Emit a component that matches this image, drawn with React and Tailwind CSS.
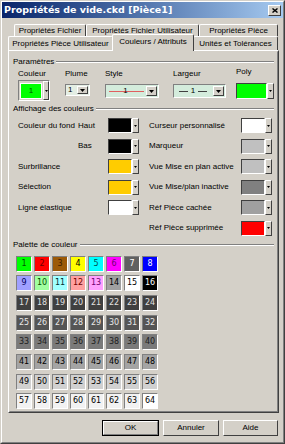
import React from "react";

const Tri = ({ w = 5, h = 3 }) => (
  <svg width={w} height={h} viewBox={`0 0 ${w} ${h}`}>
    <path d={`M0 0H${w}L${w / 2} ${h}Z`} fill="#000" />
  </svg>
);

const Arrow = ({ className = "" }) => (
  <div
    className={`flex items-center justify-center bg-[#d4d0c8] border border-t-white border-l-white border-r-[#404040] border-b-[#404040] ${className}`}
  >
    <Tri w={3} h={2} />
  </div>
);

const ColorBtn = ({ color }) => (
  <div className="flex h-[15px]">
    <div
      className="w-[24px] h-[15px] border border-t-[#404040] border-l-[#404040] border-r-white border-b-white"
      style={{ background: color }}
    />
    <Arrow className="w-[7px] h-[15px]" />
  </div>
);

const Dropdown = ({ w, h, bg, children, aw = 11 }) => (
  <div
    className={`flex items-stretch border border-t-[#808080] border-l-[#808080] border-r-white border-b-white`}
    style={{ width: w, height: h, background: bg }}
  >
    <div className="flex-1 relative flex items-center justify-center">{children}</div>
    <div className="flex items-center justify-center bg-[#d4d0c8] border border-t-white border-l-white border-r-[#404040] border-b-[#404040] m-[1px]" style={{ width: aw }}>
      <Tri w={5} h={3} />
    </div>
  </div>
);

const GroupLabel = ({ text }) => (
  <div className="flex items-center h-[10px] pl-[3px] pr-[3px]">
    <span className="leading-[10px]">{text}</span>
    <div className="flex-1 ml-[2px] border-t border-t-[#808080] border-b border-b-white" />
  </div>
);

const palette = [
  ["#00ff00", "#005000"], ["#ff0000", "#700000"], ["#9c5a08", "#3c2000"], ["#ffff00", "#000000"],
  ["#00ffff", "#005050"], ["#ff00ff", "#700070"], ["#606060", "#ffffff"], ["#0000ff", "#ffffff"],
  ["#a0a0ff", "#000060"], ["#a0ffa0", "#005000"], ["#a0ffff", "#003030"], ["#ffa0a0", "#700000"],
  ["#ffa0ff", "#700070"], ["#a0a0a0", "#000000"], ["#ffffff", "#000000"], ["#000000", "#ffffff"],
];
for (let i = 17; i <= 24; i++) palette.push(["#404040", "#e0e0e0"]);
for (let i = 25; i <= 32; i++) palette.push(["#555555", "#e8e8e8"]);
for (let i = 33; i <= 40; i++) palette.push(["#7a7a7a", "#202020"]);
for (let i = 41; i <= 48; i++) palette.push(["#a4a4a4", "#000000"]);
for (let i = 49; i <= 56; i++) palette.push(["#d0d0d0", "#000000"]);
for (let i = 57; i <= 64; i++) palette.push([i === 64 ? "#ffffff" : "#f2f2f2", "#000000"]);

const leftRows = [
  ["Couleur du fond", "Haut", "#000000"],
  [null, "Bas", "#000000"],
  ["Surbrillance", null, "#ffcc00"],
  ["Sélection", null, "#ffcc00"],
  ["Ligne élastique", null, "#ffffff"],
];
const rightRows = [
  ["Curseur personnalisé", "#ffffff"],
  ["Marqueur", "#c0c0c0"],
  ["Vue Mise en plan active", "#c0c0c0"],
  ["Vue Mise/plan inactive", "#808080"],
  ["Réf Pièce cachée", "#a0a0a0"],
  ["Réf Pièce supprimée", "#ff0000"],
];

const Tab = ({ w, children }) => (
  <div
    className="h-full flex items-center justify-center border-t border-l border-t-white border-l-white border-r border-r-[#404040] rounded-tl-[2px] rounded-tr-[2px] whitespace-nowrap leading-[10px]"
    style={{ width: w }}
  >
    {children}
  </div>
);

export default function App() {
  return (
    <div className="w-[285px] h-[444px] bg-[#d4d0c8] border border-t-[#d4d0c8] border-l-[#d4d0c8] border-r-[#404040] border-b-[#404040] font-['Liberation_Sans',sans-serif] text-[8px] text-black overflow-hidden">
      <div className="h-full flex flex-col border border-t-white border-l-white border-r-[#808080] border-b-[#808080]">
        {/* Title bar */}
        <div className="h-[16px] flex items-center justify-between pl-[2px] pr-[2px] bg-gradient-to-r from-[#0a246a] to-[#a6caf0]">
          <span className="font-['DejaVu_Sans',sans-serif] font-bold text-[9.5px] leading-[12px] text-white whitespace-nowrap">
            Propriétés de vide.ckd [Pièce1]
          </span>
          <div className="w-[13px] h-[11px] flex items-center justify-center bg-[#d4d0c8] border border-t-white border-l-white border-r-[#404040] border-b-[#404040]">
            <svg width="6" height="5" viewBox="0 0 6 5">
              <path d="M0.5 0.5L5.5 4.5M5.5 0.5L0.5 4.5" stroke="#000" strokeWidth="1.4" />
            </svg>
          </div>
        </div>

        {/* Tabs */}
        <div className="mt-[6px] h-[12px] flex pl-[12px]">
          <Tab w={72}>Propriétés Fichier</Tab>
          <Tab w={113}>Propriétés Fichier Utilisateur</Tab>
          <Tab w={79}>Propriétés Pièce</Tab>
        </div>
        <div className="h-[14px] flex pl-[6px] items-end">
          <Tab w={105}>Propriétés Pièce Utilisateur</Tab>
          <div
            className="relative z-10 -mb-[1px] -mx-[1px] h-[17px] w-[82px] bg-[#d4d0c8] flex items-center justify-center border-t border-l border-t-white border-l-white border-r border-r-[#404040] rounded-tl-[2px] rounded-tr-[2px] whitespace-nowrap leading-[10px] pb-[2px]"
          >
            Couleurs / Attributs
          </div>
          <Tab w={85}>Unités et Tolérances</Tab>
        </div>

        {/* Panel */}
        <div className="ml-[6px] w-[271px] h-[363px] border border-t-white border-l-white border-r-[#404040] border-b-[#404040]">
          <div className="h-full flex flex-col border border-transparent border-r-[#808080] border-b-[#808080] pt-[5px]">
            <GroupLabel text="Paramètres" />

            <div className="flex items-start pl-[8px] mt-[2px]">
              {/* Couleur */}
              <div className="w-[32px] flex flex-col">
                <div className="h-[10px] leading-[10px]">Couleur</div>
                <div className="mt-[1px] flex h-[21px] border border-t-[#808080] border-l-[#808080] border-r-white border-b-white">
                  <div className="mt-[2px] ml-[1px] w-[23px] h-[16px] bg-[#00ff00] flex items-center justify-center text-[#005000] border border-white">1</div>
                  <Arrow className="ml-[1px] w-[6px] h-[19px]" />
                </div>
              </div>
              {/* Plume */}
              <div className="ml-[15px] w-[25px] flex flex-col">
                <div className="h-[10px] leading-[10px]">Plume</div>
                <div className="mt-[5px]">
                  <Dropdown w={25} h={12} bg="#e4eee4" aw={11}>
                    <span className="absolute left-[2px] leading-[10px]">1</span>
                  </Dropdown>
                </div>
              </div>
              {/* Style */}
              <div className="ml-[15px] w-[54px] flex flex-col">
                <div className="h-[10px] leading-[10px]">Style</div>
                <div className="mt-[5px]">
                  <Dropdown w={54} h={14} bg="#d4ecdc" aw={11}>
                    <div className="absolute left-[3px] right-[1px] top-1/2 h-px bg-[#e06060]" />
                    <span className="relative leading-[10px] px-[1px]">1</span>
                  </Dropdown>
                </div>
              </div>
              {/* Largeur */}
              <div className="ml-[14px] w-[53px] flex flex-col">
                <div className="h-[10px] leading-[10px]">Largeur</div>
                <div className="mt-[5px]">
                  <Dropdown w={53} h={14} bg="#d4ecdc" aw={11}>
                    <div className="flex items-center gap-[3px]">
                      <div className="w-[9px] h-px bg-[#404040]" />
                      <span className="leading-[10px]">1</span>
                      <div className="w-[9px] h-px bg-[#404040]" />
                    </div>
                  </Dropdown>
                </div>
              </div>
              {/* Poly */}
              <div className="ml-[10px] w-[41px] flex flex-col -mt-[2px]">
                <div className="h-[10px] leading-[10px]">Poly</div>
                <div className="mt-[6px] flex h-[16px]">
                  <div className="w-[31px] h-[16px] bg-[#00ff00] border border-t-[#404040] border-l-[#404040] border-r-white border-b-white" />
                  <Arrow className="w-[7px] h-[16px]" />
                </div>
              </div>
            </div>

            <div className="mt-[3px]">
              <GroupLabel text="Affichage des couleurs" />
            </div>

            <div className="flex pl-[8px] mt-[4px]">
              <div className="w-[121px] flex flex-col gap-[5.5px]">
                {leftRows.map(([a, b, c], i) => (
                  <div key={i} className="flex items-center h-[15px]">
                    <div className="w-[91px] relative h-[10px] leading-[10px]">
                      {a && <span className="absolute left-0">{a}</span>}
                      {b && <span className="absolute left-[60px]">{b}</span>}
                    </div>
                    <ColorBtn color={c} />
                  </div>
                ))}
              </div>
              <div className="ml-[10px] w-[124px] flex flex-col gap-[5.5px]">
                {rightRows.map(([a, c], i) => (
                  <div key={i} className="flex items-center h-[15px]">
                    <div className="w-[92px] leading-[10px] whitespace-nowrap">{a}</div>
                    <ColorBtn color={c} />
                  </div>
                ))}
              </div>
            </div>

            <div className="mt-[4px]">
              <GroupLabel text="Palette de couleur" />
            </div>

            <div className="mt-[6px] ml-[6px] grid grid-cols-[repeat(8,16px)] gap-x-[2px] gap-y-[3.7px] font-['DejaVu_Sans',sans-serif] text-[8px]">
              {palette.map(([bg, fg], i) => (
                <div
                  key={i}
                  className="w-[16px] h-[16px] flex items-center justify-center border border-t-[#808080] border-l-[#808080] border-r-white border-b-white leading-none"
                  style={{ background: bg, color: fg }}
                >
                  {i + 1}
                </div>
              ))}
            </div>
          </div>
        </div>

        {/* Buttons */}
        <div className="mt-[7px] flex justify-end pr-[5px] gap-[4px]">
          <div className="w-[57px] h-[16px] border border-black">
            <div className="h-full flex items-center justify-center border border-t-white border-l-white border-r-[#808080] border-b-[#808080]">OK</div>
          </div>
          <div className="w-[56px] h-[16px] flex items-center justify-center border border-t-white border-l-white border-r-[#404040] border-b-[#404040]">Annuler</div>
          <div className="w-[55px] h-[16px] flex items-center justify-center border border-t-white border-l-white border-r-[#404040] border-b-[#404040]">Aide</div>
        </div>
      </div>
    </div>
  );
}
